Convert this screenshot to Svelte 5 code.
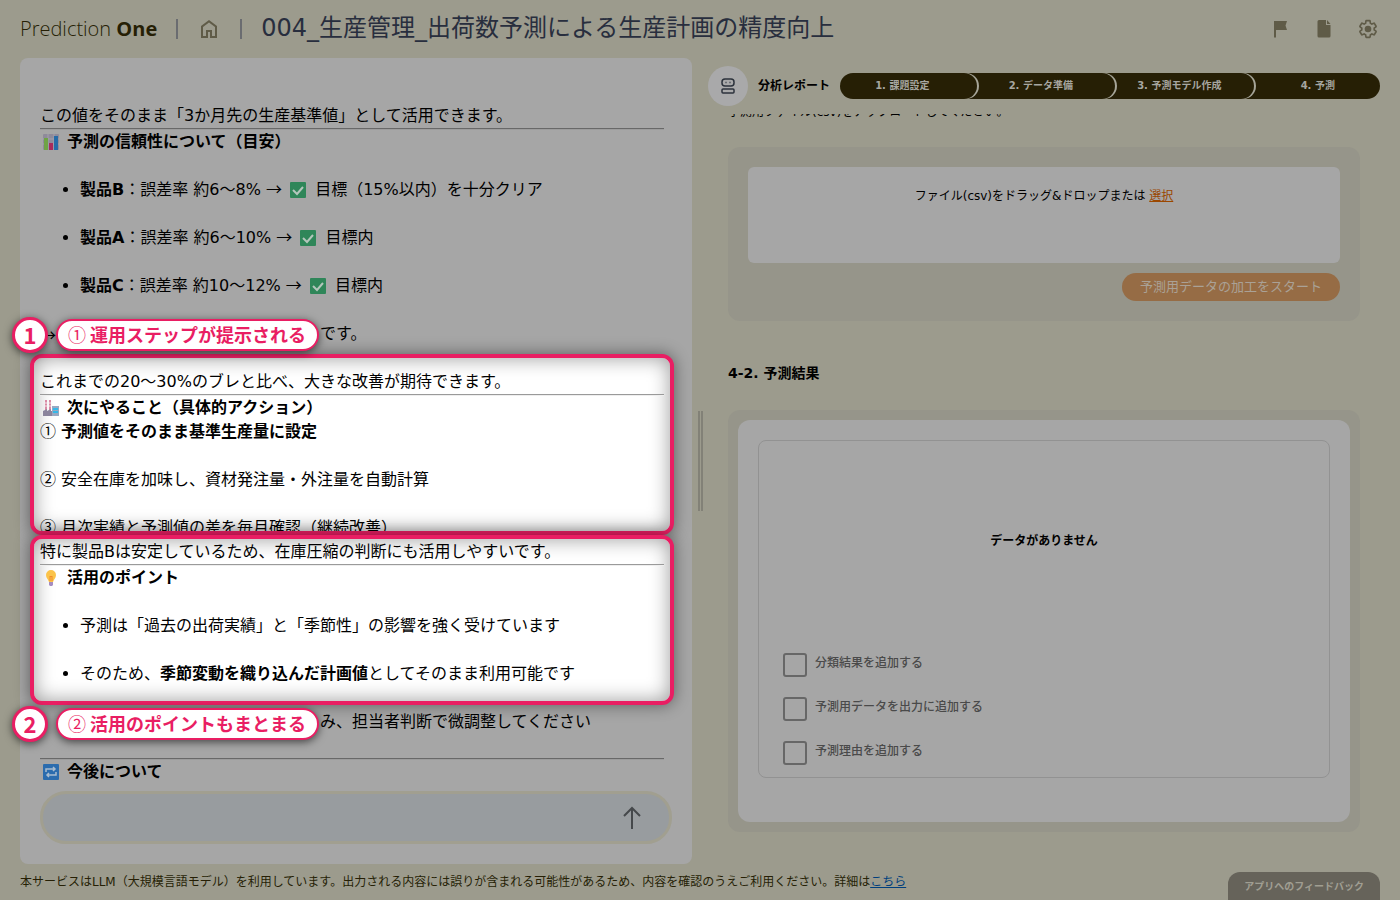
<script>
  const products = [
    { name: '製品B', error: '約6～8%', result: '目標（15%以内）を十分クリア' },
    { name: '製品A', error: '約6～10%', result: '目標内' },
    { name: '製品C', error: '約10～12%', result: '目標内' }
  ];

  const steps = ['1. 課題設定', '2. データ準備', '3. 予測モデル作成', '4. 予測'];

  let options = [
    { id: 'opt-class', label: '分類結果を追加する', checked: false },
    { id: 'opt-data', label: '予測用データを出力に追加する', checked: false },
    { id: 'opt-reason', label: '予測理由を追加する', checked: false }
  ];

  let message = '';
</script>

<div class="app">
  <header class="header">
    <span class="logo">Prediction <b>One</b></span>
    <span class="bar"></span>
    <a class="home" href="#home" aria-label="ホーム">
      <svg viewBox="0 0 24 24" width="24" height="24"><path d="M6 19h3v-6h6v6h3v-9l-6-4.5L6 10v9Zm-2 2V9l8-6 8 6v12h-7v-6h-2v6H4Z" /></svg>
    </a>
    <span class="bar"></span>
    <h1 class="title">004_生産管理_出荷数予測による生産計画の精度向上</h1>
    <nav class="tools">
      <button class="tool" aria-label="フラグ">
        <svg viewBox="0 0 24 24" width="24" height="24"><path d="M6 20.500V4H19l-1.500 4.500L19 13H8v7.500z" /></svg>
      </button>
      <button class="tool" aria-label="ドキュメント">
        <svg viewBox="0 0 24 24" width="24" height="24"><path d="M5.500 4.500Q5.500 3 7 3h7v5h4.500v11q0 1.500-1.500 1.500H7q-1.500 0-1.500-1.500zM15 3l3.500 4H15z" /></svg>
      </button>
      <button class="tool" aria-label="設定">
        <svg viewBox="0 0 24 24" width="20" height="20">
          <path class="gear" d="M19.430 12.980c.04-.32.07-.64.07-.98s-.03-.66-.07-.98l2.110-1.650c.19-.15.24-.42.12-.64l-2-3.460c-.12-.22-.39-.3-.61-.22l-2.490 1c-.52-.4-1.080-.73-1.690-.98l-.38-2.650C14.460 2.180 14.250 2 14 2h-4c-.25 0-.46.18-.49.42l-.38 2.650c-.61.25-1.170.59-1.690.98l-2.490-1c-.23-.09-.49 0-.61.22l-2 3.460c-.13.22-.07.49.12.64l2.110 1.650c-.04.32-.07.65-.07.98s.03.66.07.98l-2.110 1.650c-.19.15-.24.42-.12.64l2 3.460c.12.22.39.3.61.22l2.490-1c.52.4 1.080.73 1.690.98l.38 2.650c.03.24.24.42.49.42h4c.25 0 .46-.18.49-.42l.38-2.650c.61-.25 1.170-.59 1.690-.98l2.490 1c.23.09.49 0 .61-.22l2-3.460c.12-.22.07-.49-.12-.64z" />
          <circle cx="12" cy="12" r="4" />
        </svg>
      </button>
    </nav>
  </header>

  <main class="main">
    <section class="chat">
      <div class="doc">
        <p>この値をそのまま「3か月先の生産基準値」として活用できます。</p>
        <hr />
        <h2>
          <svg class="emoji" viewBox="0 0 16 16">
            <rect width="16" height="16" rx="1" fill="#8f8b9a" />
            <path d="M0 5h16M0 10h16M5 0v16M11 0v16" stroke="#a3a0ac" />
            <rect x="1" y="4" width="4" height="12" fill="#6fa345" />
            <rect x="6" y="9" width="4" height="7" fill="#a82a5b" />
            <rect x="11" y="2" width="4" height="14" fill="#246ba8" />
          </svg>
          予測の信頼性について（目安）
        </h2>
        <ul>
          {#each products as product}
            <li>
              <b>{product.name}</b>：誤差率 {product.error} <span class="sym">→</span>
              <svg class="emoji check" viewBox="0 0 16 16">
                <rect width="16" height="16" rx="1" fill="#2f8659" />
                <path d="M3 8l4 4 6-7" fill="none" stroke="#b4c6bc" stroke-width="2" />
              </svg>
              {product.result}
            </li>
          {/each}
        </ul>
        <p class="covered"><span class="sym">→</span><span>です。</span></p>

        <div class="spot">
          <div class="spot-body spot-cut">
            <p>これまでの20～30%のブレと比べ、大きな改善が期待できます。</p>
            <hr />
            <h2>
              <svg class="emoji" viewBox="0 0 16 16">
                <path d="M2 10V0h2v10M6 10V0h2v10" fill="#d98aa4" />
                <path d="M2 3h2M2 6h2M6 3h2M6 6h2" stroke="#f3e3e8" />
                <path d="M0 11l4-2v2l4-2v2h2v5H0z" fill="#8b849c" />
                <rect x="9" y="6" width="7" height="10" fill="#98a9c2" />
                <path d="M10 8h5v2h-5zM10 11h5v2h-5z" fill="#35b8e8" />
              </svg>
              次にやること（具体的アクション）
            </h2>
            <p><span class="sym">①</span> <b>予測値をそのまま基準生産量に設定</b></p>
            <p class="spaced"><span class="sym">②</span> 安全在庫を加味し、資材発注量・外注量を自動計算</p>
            <p class="spaced"><span class="sym">③</span> 月次実績と予測値の差を毎月確認（継続改善）</p>
          </div>
          <div class="note note-top">
            <span class="note-num">1</span>
            <span class="note-label"><span class="note-mark">①</span> 運用ステップが提示される</span>
          </div>
        </div>

        <div class="spot">
          <div class="spot-body">
            <p>特に製品Bは安定しているため、在庫圧縮の判断にも活用しやすいです。</p>
            <hr />
            <h2>
              <svg class="emoji" viewBox="0 0 16 16">
                <path d="M8 0a5 5 0 0 1 5 5c0 3-2 4-3 7H6C5 9 3 8 3 5a5 5 0 0 1 5-5z" fill="#fbc34a" />
                <path d="M7 11V6l1 1 1-1v5" fill="none" stroke="#f08a2c" />
                <path d="M6 12h4v3l-1 1H7l-1-1z" fill="#a58cc0" />
              </svg>
              活用のポイント
            </h2>
            <ul>
              <li>予測は「過去の出荷実績」と「季節性」の影響を強く受けています</li>
              <li>そのため、<b>季節変動を織り込んだ計画値</b>としてそのまま利用可能です</li>
            </ul>
          </div>
          <div class="note note-bottom">
            <span class="note-num">2</span>
            <span class="note-label"><span class="note-mark">②</span> 活用のポイントもまとまる</span>
          </div>
        </div>

        <p class="covered covered-last"><span></span><span>み、担当者判断で微調整してください</span></p>
        <hr />
        <h2>
          <svg class="emoji" viewBox="0 0 16 16">
            <rect width="16" height="16" rx="1" fill="#2b6cae" />
            <path d="M3 8V5h9M10 3l2 2-2 2M13 8v3H4M6 9l-2 2 2 2" fill="none" stroke="#a9bccf" stroke-width="1.500" />
          </svg>
          今後について
        </h2>
      </div>
      <form class="composer" on:submit|preventDefault>
        <input type="text" aria-label="メッセージ" bind:value={message} />
        <button aria-label="送信">
          <svg viewBox="0 0 24 24" width="24" height="24"><path d="M12 23V2M4 10l8-8 8 8" /></svg>
        </button>
      </form>
    </section>

    <div class="grip"></div>

    <section class="report">
      <div class="report-head">
        <span class="bot">
          <svg viewBox="0 0 16 16" width="16" height="16">
            <rect x="2" y="1" width="12" height="7" rx="3" />
            <rect x="2" y="11" width="12" height="4" rx="1" />
            <path d="M5.500 4.500h1M9.500 4.500h1" />
          </svg>
        </span>
        <b class="report-name">分析レポート</b>
        <ol class="steps">
          {#each steps as step}
            <li>{step}</li>
          {/each}
        </ol>
      </div>
      <div class="report-body">
        <p class="lead">予測用ファイル(csv)をアップロードしてください。</p>
        <div class="card upload">
          <div class="dropzone">ファイル(csv)をドラッグ&amp;ドロップまたは <a href="#select">選択</a></div>
          <button class="start">予測用データの加工をスタート</button>
        </div>
        <h3 class="subtitle">4-2. 予測結果</h3>
        <div class="card result">
          <div class="sheet">
            <div class="frame">
              <p class="empty">データがありません</p>
              <div class="options">
                {#each options as option}
                  <div class="option">
                    <input type="checkbox" id={option.id} bind:checked={option.checked} />
                    <label for={option.id}>{option.label}</label>
                  </div>
                {/each}
              </div>
            </div>
          </div>
        </div>
      </div>
    </section>
  </main>

  <footer class="footer">
    <p>本サービスはLLM（大規模言語モデル）を利用しています。出力される内容には誤りが含まれる可能性があるため、内容を確認のうえご利用ください。詳細は<a href="#details">こちら</a></p>
    <button class="feedback">アプリへのフィードバック</button>
  </footer>
</div>

<style>
  :global(body) {
    background: #9c9b8d;
  }
  .app {
    --page: #9c9b8d;
    --panel: #a6a6a6;
    --dark: #261f05;
    --pink: #e91e63;
    --jp: "Noto Sans CJK JP", sans-serif;
    display: flex;
    flex-direction: column;
    min-height: 100vh;
    overflow: hidden;
    background: var(--page);
    color: #000;
    font-family: "DejaVu Sans", var(--jp);
    font-size: 12px;
    line-height: 18px;
  }
  p, h1, h2, h3, ul, ol {
    margin: 0;
    padding: 0;
  }
  button, input {
    font-family: inherit;
    margin: 0;
    padding: 0;
    border: 0;
    background: none;
  }
  .header {
    display: flex;
    align-items: center;
    height: 58px;
    padding: 0 20px;
  }
  .logo {
    font-family: "Open Sans", sans-serif;
    font-size: 20px;
    line-height: 28px;
    font-weight: 300;
    color: var(--dark);
  }
  .logo b {
    font-weight: 700;
  }
  .bar {
    width: 2px;
    height: 20px;
    margin: 0 19px;
    background: #6a6c70;
  }
  .home {
    display: flex;
  }
  .header svg {
    display: block;
    fill: #5f5b47;
  }
  .title {
    padding-bottom: 2px;
    font-size: 24px;
    line-height: 32px;
    font-weight: 400;
    color: #282e3e;
    white-space: nowrap;
  }
  .tools {
    display: flex;
    gap: 20px;
    margin-left: auto;
  }
  .tool {
    display: flex;
    align-items: center;
    justify-content: center;
    width: 24px;
    height: 24px;
  }
  .tool .gear {
    fill: none;
    stroke: #5f5b47;
    stroke-width: 2;
  }
  .main {
    display: grid;
    grid-template-columns: minmax(0, 1fr) 16px minmax(0, 1fr);
    flex: 1;
    padding: 0 20px;
  }
  .chat {
    display: flex;
    flex-direction: column;
    justify-content: space-between;
    padding: 46px 20px 20px;
    border-radius: 8px;
    background: var(--panel);
  }
  .doc {
    padding-right: 8px;
    font-size: 16px;
    line-height: 24px;
  }
  .doc h2 {
    display: flex;
    align-items: center;
    font-size: 16px;
    line-height: 24px;
    font-weight: 700;
  }
  .doc hr {
    margin: 0;
    border: 0;
    border-top: 1px solid #686868;
    border-bottom: 1px solid #9c9c9c;
  }
  .doc ul {
    padding-left: 40px;
  }
  .doc li {
    margin: 24px 0;
  }
  .emoji {
    width: 16px;
    height: 16px;
    margin: 0 8px 0 3px;
    flex-shrink: 0;
  }
  .check {
    margin: 0 4px 0 3px;
    vertical-align: -3px;
  }
  .sym {
    font-family: var(--jp);
    line-height: 16px;
  }
  .spaced {
    margin-top: 24px;
  }
  .covered {
    display: grid;
    grid-template-columns: 280px 1fr;
    align-items: center;
    margin-bottom: 8px;
  }
  .covered-last {
    margin: 5px 0 24px;
  }
  .spot {
    position: relative;
    margin: 0 -10px;
    border: 4px solid var(--pink);
    border-radius: 12px;
    background: #fff;
    box-shadow: 0 0 16px rgba(0, 0, 0, .45), inset 0 0 20px rgba(0, 0, 0, .4);
  }
  .spot-body {
    padding: 1px 6px 15px;
  }
  .spot-body ul {
    margin-bottom: 0;
  }
  .spot-body li:last-child {
    margin-bottom: 0;
  }
  .spot-cut {
    height: 161px;
    padding: 12px 6px 0;
    overflow: hidden;
  }
  .spot hr {
    border-top-color: #9a9a9a;
    border-bottom-color: #eee;
  }
  .note {
    position: absolute;
    left: -22px;
    z-index: 1;
    display: flex;
    align-items: center;
    gap: 8px;
    color: var(--pink);
    font-family: var(--jp);
    font-weight: 700;
    white-space: nowrap;
  }
  .note-top {
    bottom: calc(100% + 5px);
  }
  .note-bottom {
    top: calc(100% + 5px);
  }
  .note-num,
  .note-label {
    box-sizing: border-box;
    background: #fff;
    box-shadow: 0 2px 8px rgba(0, 0, 0, .6);
  }
  .note-num {
    width: 36px;
    height: 36px;
    border: 3px solid var(--pink);
    border-radius: 50%;
    font-size: 22px;
    line-height: 28px;
    text-align: center;
  }
  .note-label {
    height: 32px;
    padding: 0 11px 0 10px;
    border: 2px solid var(--pink);
    border-radius: 16px;
    font-size: 18px;
    line-height: 26px;
  }
  .note-mark {
    font-weight: 400;
  }
  .composer {
    display: flex;
    align-items: center;
    box-sizing: border-box;
    height: 53px;
    padding: 0 25px;
    border: 3px solid #a19f90;
    border-radius: 26px;
    background: #989c9f;
  }
  .composer input {
    flex: 1;
    font-size: 16px;
    outline: 0;
  }
  .composer svg {
    display: block;
    fill: none;
    stroke: #45484b;
    stroke-width: 2;
  }
  .grip {
    align-self: center;
    justify-self: center;
    width: 1px;
    height: 100px;
    border: solid #828177;
    border-width: 0 2px;
  }
  .report-head {
    display: flex;
    align-items: center;
    height: 40px;
    margin-top: 8px;
  }
  .bot {
    display: flex;
    align-items: center;
    justify-content: center;
    width: 40px;
    height: 40px;
    margin-right: 10px;
    border-radius: 50%;
    background: #a9a9aa;
  }
  .bot svg {
    fill: none;
    stroke: #2c323c;
    stroke-width: 1.5;
  }
  .report-name {
    white-space: nowrap;
  }
  .steps {
    display: flex;
    flex: 1;
    margin-left: 10px;
    border-radius: 13px;
    overflow: hidden;
    background: var(--dark);
    color: #a6a6a0;
    font-size: 10px;
    line-height: 26px;
    font-weight: 700;
    list-style: none;
    text-align: center;
  }
  .steps li {
    flex: 1 1 0;
    margin-right: 2px;
    padding-right: 12px;
    border-radius: 0 13px 13px 0;
    box-shadow: 2px 0 0 #a6a598;
    white-space: nowrap;
  }
  .steps li:last-child {
    margin-right: 0;
    padding-right: 0;
    box-shadow: none;
  }
  .report-body {
    margin-top: 8px;
    padding: 0 20px;
    overflow: hidden;
  }
  .lead {
    margin: -11px 0 26px;
  }
  .card {
    border-radius: 12px;
    background: #96958a;
  }
  .upload {
    display: flex;
    flex-direction: column;
    gap: 10px;
    padding: 20px;
  }
  .dropzone {
    box-sizing: border-box;
    height: 96px;
    padding-top: 20px;
    border-radius: 6px;
    background: var(--panel);
    text-align: center;
  }
  .dropzone a {
    color: #9b4700;
  }
  .start {
    align-self: flex-end;
    height: 28px;
    padding: 0 18px 3px;
    border-radius: 14px;
    background: #966c45;
    color: #aaa196;
    font-size: 13px;
  }
  .subtitle {
    margin: 40px 0 25px;
    font-size: 14px;
    line-height: 24px;
  }
  .result {
    padding: 10px;
  }
  .sheet {
    padding: 20px 20px 44px;
    border-radius: 12px;
    background: var(--panel);
  }
  .frame {
    padding: 91px 24px 12px;
    border: 1px solid #929292;
    border-radius: 8px;
  }
  .empty {
    font-weight: 700;
    text-align: center;
  }
  .options {
    display: flex;
    flex-direction: column;
    gap: 20px;
    margin-top: 103px;
  }
  .option {
    display: flex;
    gap: 8px;
    height: 24px;
    color: #4a4a4a;
    line-height: 20px;
    font-weight: 500;
  }
  .option input {
    appearance: none;
    box-sizing: border-box;
    width: 24px;
    height: 24px;
    border: 2px solid #676767;
    border-radius: 3px;
  }
  .option input:checked {
    background: #676767;
  }
  .footer {
    display: flex;
    align-items: center;
    justify-content: space-between;
    height: 36px;
    padding: 0 20px;
    color: var(--dark);
  }
  .footer a {
    color: #003f7d;
  }
  .feedback {
    align-self: flex-end;
    height: 28px;
    padding: 0 16px 2px;
    border-radius: 12px 12px 0 0;
    background: #66635a;
    color: #a09e92;
    font-size: 10px;
    font-weight: 700;
  }
</style>
